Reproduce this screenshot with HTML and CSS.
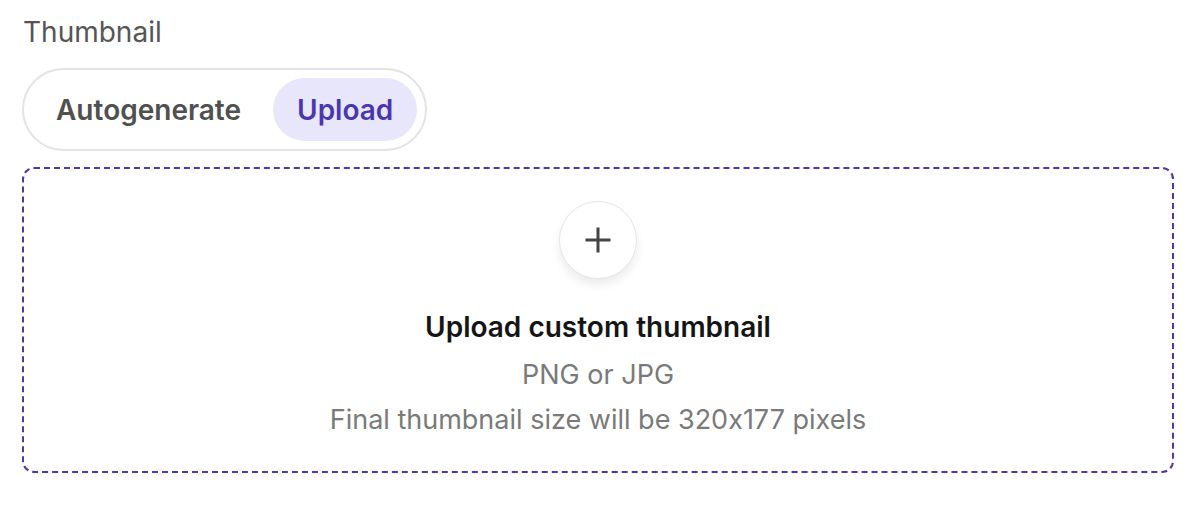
FILE: index.html
```html
<!DOCTYPE html>
<html>
<head>
<meta charset="utf-8">
<link rel="stylesheet" href="styles.css">
</head>
<body>
<div class="field">
  <div class="label">Thumbnail</div>
  <div class="segmented">
    <button class="seg">Autogenerate</button>
    <button class="seg active">Upload</button>
  </div>
  <div class="dropzone">
    <div class="plus">
      <svg width="28" height="28" viewBox="0 0 28 28"><path d="M14 1.5V26.5M1.5 14H26.5" stroke="#444" stroke-width="3" fill="none"/></svg>
    </div>
    <div class="title">Upload custom thumbnail</div>
    <div class="sub first">PNG or JPG</div>
    <div class="sub">Final thumbnail size will be 320x177 pixels</div>
  </div>
</div>
</body>
</html>
```
FILE: styles.css
```css
* { box-sizing: border-box; }
html, body { margin: 0; background: #fff; }
body { font-family: Inter, "Noto Sans", sans-serif; font-feature-settings: "calt" 0; }
.field { padding: 14px 26px 0 22px; }
.label { font-size: 28px; color: #555; line-height: 36px; margin-left: 1px; }
.segmented {
  display: inline-flex;
  gap: 8px;
  margin-top: 18px;
  padding: 8px;
  border: 2px solid #e3e3e3;
  border-radius: 999px;
}
.seg {
  font-family: inherit;
  font-feature-settings: "calt" 0;
  font-size: 28px;
  font-weight: 600;
  color: #505050;
  background: transparent;
  border: 0;
  border-radius: 999px;
  height: 63px;
  padding: 0 24px;
  cursor: pointer;
}
.seg.active { background: #e8e6fb; color: #4a37b0; }
.dropzone {
  margin-top: 16px;
  border: 2px dashed #4b3aa6;
  border-radius: 12px;
  height: 306px;
  display: flex;
  flex-direction: column;
  align-items: center;
  padding-top: 32px;
}
.plus {
  width: 78px; height: 78px;
  border-radius: 50%;
  background: #fff;
  border: 1.5px solid #e6e6e6;
  box-shadow: 0 6px 10px rgba(0,0,0,0.08);
  display: flex; align-items: center; justify-content: center;
}
.title { margin-top: 33px; font-size: 28px; font-weight: 600; color: #151515; line-height: 30px; }
.sub { font-size: 27px; color: #7a7a7a; line-height: 45px; }
.sub.first { margin-top: 10px; }
```
